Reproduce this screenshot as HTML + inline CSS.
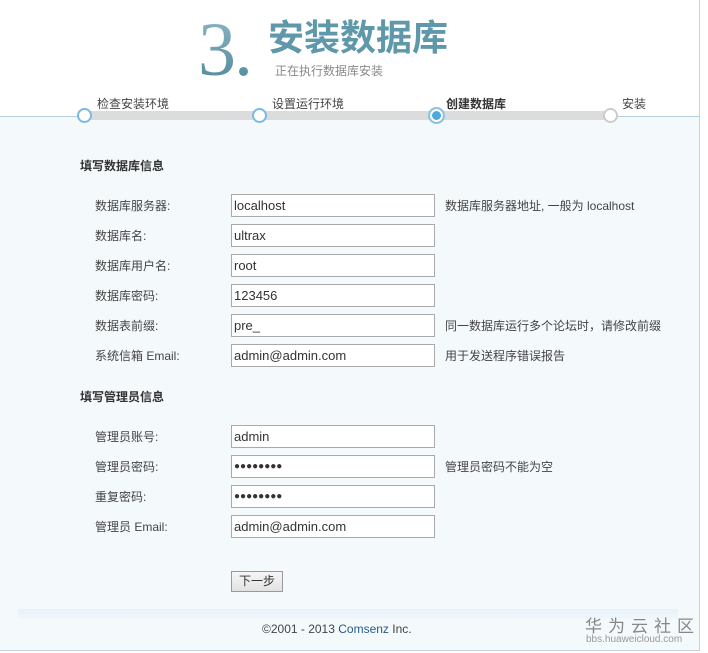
<!DOCTYPE html>
<html><head><meta charset="utf-8"><style>
*{margin:0;padding:0;box-sizing:border-box}
body{width:708px;height:653px;background:#fff;font-family:"Liberation Sans","Noto Sans CJK SC",sans-serif;font-size:12px;color:#444;position:relative;overflow:hidden}
.frame{position:absolute;left:0;top:0;width:700px;height:651px;border-right:1px solid #c8d2da;border-bottom:1px solid #c8d2da}
.bg{position:absolute;left:0;top:116px;width:699px;height:534px;background:#f4f9fc;border-top:1px solid #b8cfe0}
.a{position:absolute;white-space:nowrap}
.bar{position:absolute;left:84px;top:111px;width:526px;height:9px;background:#dcdcdc}
.c{position:absolute;width:15px;height:15px;border-radius:50%;border:2px solid #7cb9e0;background:#fff;top:108px}
.in{position:absolute;left:231px;width:204px;height:23px;border:1px solid #a9a9a9;background:#fff;font-size:13px;padding:3px 2px;color:#333}
.lb{position:absolute;left:95px;font-size:12px;color:#444}
.tip{position:absolute;left:445px;font-size:12px;color:#444}
.h{position:absolute;left:80px;font-weight:bold;font-size:12px;color:#333}
</style></head><body>
<div class="frame"></div>
<div class="bg"></div>
<div class="a" style="left:198px;top:10px;font-family:'Liberation Serif',serif;font-size:76px;line-height:80px;color:#5f99aa;letter-spacing:-2px;background:linear-gradient(#8fb8c6,#4f8798);-webkit-background-clip:text;background-clip:text;-webkit-text-fill-color:transparent">3.</div>
<div class="a" style="left:268px;top:17px;font-size:36px;font-weight:bold;color:#5f98aa;line-height:42px">安装数据库</div>
<div class="a" style="left:275px;top:62px;font-size:12px;color:#888">正在执行数据库安装</div>
<div class="bar"></div>
<div class="c" style="left:77px"></div>
<div class="c" style="left:252px"></div>
<div class="c" style="left:428px;width:17px;height:17px;top:107px;border-color:#8cc3e4;background:#4fa8dc;box-shadow:inset 0 0 0 2px #fff"></div>
<div class="c" style="left:603px;border-color:#ccc"></div>
<div class="a" style="left:97px;top:95px;color:#444">检查安装环境</div>
<div class="a" style="left:272px;top:95px;color:#444">设置运行环境</div>
<div class="a" style="left:446px;top:95px;color:#333;font-weight:bold">创建数据库</div>
<div class="a" style="left:622px;top:95px;color:#444">安装</div>

<div class="h" style="top:157px">填写数据库信息</div>
<div class="lb" style="top:197px">数据库服务器:</div><div class="in" style="top:194px">localhost</div><div class="tip" style="top:197px">数据库服务器地址, 一般为 localhost</div>
<div class="lb" style="top:227px">数据库名:</div><div class="in" style="top:224px">ultrax</div>
<div class="lb" style="top:257px">数据库用户名:</div><div class="in" style="top:254px">root</div>
<div class="lb" style="top:287px">数据库密码:</div><div class="in" style="top:284px">123456</div>
<div class="lb" style="top:317px">数据表前缀:</div><div class="in" style="top:314px">pre_</div><div class="tip" style="top:317px">同一数据库运行多个论坛时，请修改前缀</div>
<div class="lb" style="top:347px">系统信箱 Email:</div><div class="in" style="top:344px">admin@admin.com</div><div class="tip" style="top:347px">用于发送程序错误报告</div>

<div class="h" style="top:388px">填写管理员信息</div>
<div class="lb" style="top:428px">管理员账号:</div><div class="in" style="top:425px">admin</div>
<div class="lb" style="top:458px">管理员密码:</div><div class="in" style="top:455px;font-size:10px;padding-top:5px">●●●●●●●●</div><div class="tip" style="top:458px">管理员密码不能为空</div>
<div class="lb" style="top:488px">重复密码:</div><div class="in" style="top:485px;font-size:10px;padding-top:5px">●●●●●●●●</div>
<div class="lb" style="top:518px">管理员 Email:</div><div class="in" style="top:515px">admin@admin.com</div>

<div class="a" style="left:231px;top:571px;width:52px;height:21px;border:1px solid #999;background:linear-gradient(#f6f6f6,#e2e2e2);text-align:center;line-height:19px;color:#333">下一步</div>

<div class="a" style="left:18px;top:609px;width:660px;height:12px;background:linear-gradient(to bottom,#e6f1f9,#f4f9fc)"></div>
<div class="a" style="left:262px;top:622px;font-size:12px;color:#444">©2001 - 2013 <span style="color:#2a5a8a">Comsenz</span> Inc.</div>
<div class="a" style="left:585px;top:612px;font-size:17px;color:#888;letter-spacing:6px">华为云社区</div>
<div class="a" style="left:586px;top:634px;font-size:10px;color:#999">bbs.huaweicloud.com</div>
</body></html>
